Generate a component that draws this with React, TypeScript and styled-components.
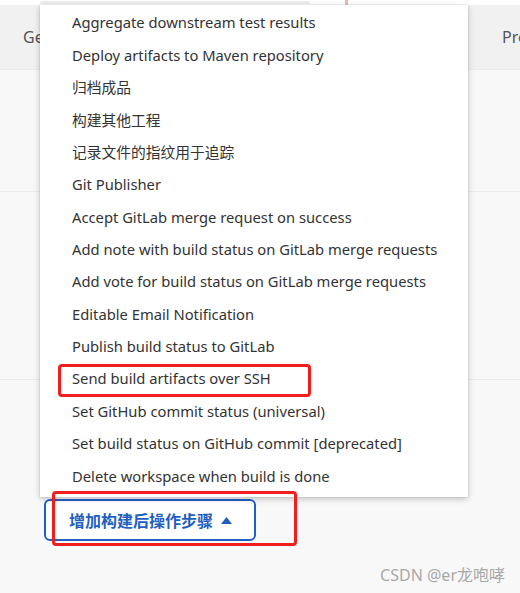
import React from "react";
import styled, { createGlobalStyle } from "styled-components";

const Global = createGlobalStyle`
  html, body { margin: 0; padding: 0; background: #f8f8f8; }
  * { box-sizing: border-box; }
`;

const Page = styled.div`
  position: relative;
  width: 520px;
  height: 593px;
  overflow: hidden;
  background: #f8f8f8;
  font-family: "Noto Sans", "Noto Sans CJK SC", sans-serif;
  display: flex;
  flex-direction: column;
`;

const TopStrip = styled.div`
  height: 5px;
  background: #ffffff;
  display: flex;
  align-items: center;
  padding-left: 40px;
  gap: 35px;
`;

const TopPill = styled.div`
  width: 270px;
  height: 3px;
  border-radius: 2px;
  background: #ececec;
`;

const TopMark = styled.div`
  width: 3px;
  height: 5px;
  background: #f7b3b3;
`;

const TabBar = styled.div`
  height: 65px;
  background: #f1f1f1;
  display: flex;
  align-items: center;
  justify-content: space-between;
  padding-left: 23px;
  border-bottom: 1px solid #ececec;
`;

const Tab = styled.span<{ $w: number }>`
  font-size: 16px;
  color: #555;
  white-space: nowrap;
  width: ${(p) => p.$w}px;
  overflow: hidden;
`;

const Content = styled.div`
  flex: 1;
  display: flex;
  flex-direction: column;
`;

const Section = styled.div<{ $h: number; $line?: boolean }>`
  height: ${(p) => p.$h}px;
  border-bottom: 1px solid ${(p) => (p.$line ? "#ececec" : "transparent")};
`;

const ButtonRow = styled.div`
  padding: 7px 0 0 44px;
  position: relative;
`;

const AddButton = styled.button`
  display: inline-flex;
  align-items: center;
  gap: 8px;
  width: 212px;
  height: 42px;
  padding: 0 0 0 23px;
  background: #ffffff;
  border: 2px solid #1f5fc2;
  border-radius: 6px;
  color: #1f5fc2;
  font-family: "Noto Sans CJK SC", "Noto Sans", sans-serif;
  font-weight: 700;
  font-size: 16px;
  cursor: pointer;
`;

const Caret = styled.svg`
  width: 11px;
  height: 7px;
  margin-top: 1px;
`;

const Annotation = styled.div<{ $l: number; $t: number; $w: number; $h: number }>`
  position: absolute;
  left: ${(p) => p.$l}px;
  top: ${(p) => p.$t}px;
  width: ${(p) => p.$w}px;
  height: ${(p) => p.$h}px;
  border: 3px solid #f21d1d;
  border-radius: 4px;
  pointer-events: none;
`;

const Menu = styled.ul`
  position: absolute;
  left: 40px;
  top: 5px;
  width: 428px;
  height: 492px;
  margin: 0;
  padding: 1px 0 0;
  list-style: none;
  background: #ffffff;
  box-shadow: 0 2px 6px rgba(0, 0, 0, 0.22), 0 0 1px rgba(0, 0, 0, 0.25);
`;

const Item = styled.li`
  height: 32.4px;
  display: flex;
  align-items: center;
  padding-left: 32px;
  font-size: 14.75px;
  color: #333;
  white-space: nowrap;
`;

const Watermark = styled.div`
  position: absolute;
  right: 15px;
  bottom: 7px;
  font-size: 16px;
  color: #a8a8a8;
  font-family: "Noto Sans", "Noto Sans CJK SC", sans-serif;
`;

const items = [
  "Aggregate downstream test results",
  "Deploy artifacts to Maven repository",
  "归档成品",
  "构建其他工程",
  "记录文件的指纹用于追踪",
  "Git Publisher",
  "Accept GitLab merge request on success",
  "Add note with build status on GitLab merge requests",
  "Add vote for build status on GitLab merge requests",
  "Editable Email Notification",
  "Publish build status to GitLab",
  "Send build artifacts over SSH",
  "Set GitHub commit status (universal)",
  "Set build status on GitHub commit [deprecated]",
  "Delete workspace when build is done",
];

export default function App() {
  return (
    <>
      <Global />
      <Page>
        <TopStrip>
          <TopPill />
          <TopMark />
        </TopStrip>
        <TabBar>
          <Tab $w={80}>General</Tab>
          <Tab $w={18}>Prebuild</Tab>
        </TabBar>
        <Content>
          <Section $h={122} $line />
          <Section $h={188} $line />
          <Section $h={112} />
          <ButtonRow>
            <AddButton>
              增加构建后操作步骤
              <Caret viewBox="0 0 11 7">
                <path d="M5.5 0 L11 7 L0 7 Z" fill="#1f5fc2" />
              </Caret>
            </AddButton>
          </ButtonRow>
        </Content>
        <Menu>
          {items.map((t) => (
            <Item key={t}>{t}</Item>
          ))}
        </Menu>
        <Annotation $l={58} $t={364} $w={253} $h={33} />
        <Annotation $l={52} $t={491} $w={245} $h={55} />
        <Watermark>CSDN @er龙咆哮</Watermark>
      </Page>
    </>
  );
}
